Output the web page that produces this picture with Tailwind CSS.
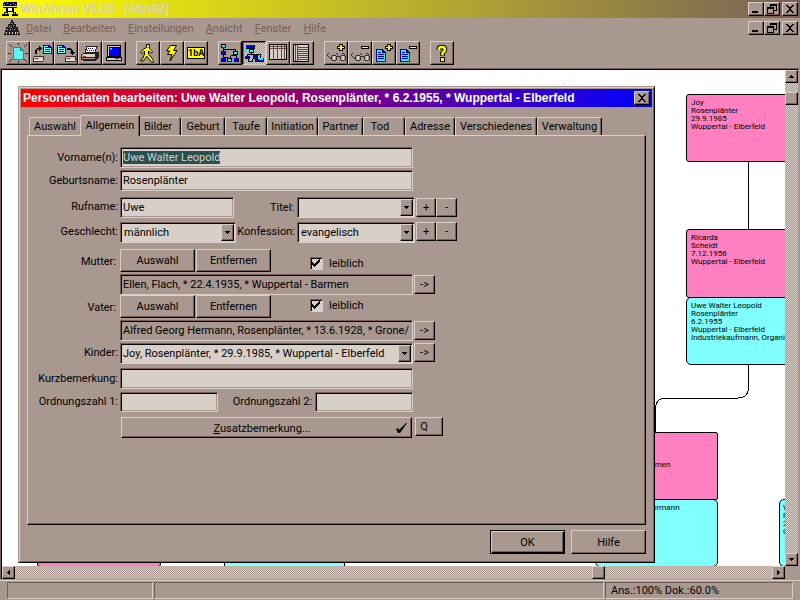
<!DOCTYPE html>
<html lang="de">
<head>
    <meta charset="UTF-8">
    <meta name="viewport" content="width=device-width, initial-scale=1.0">
    <title>WinAhnen V5.03 - [Ahn02]</title>
    <script src="https://cdn.jsdelivr.net/npm/@tailwindcss/browser@4"></script>
</head>
<body class="flex h-screen flex-col overflow-hidden bg-[#a89890] font-[Roboto,'Liberation_Sans',sans-serif] text-[11px] leading-[13px] text-black">

    <!-- Shared icons -->
    <svg class="hidden">
        <symbol id="i-min" viewBox="0 0 12 10"><path d="M2 7h6v2H2z"/></symbol>
        <symbol id="i-restore" viewBox="0 0 12 10"><path d="M4 0h7v7H8v3H1V3h3zM5 2v1h3v3h2V2zM2 5v4h5V5z" fill-rule="evenodd"/></symbol>
        <symbol id="i-close" viewBox="0 0 12 10"><path d="M2 1h2v1h1v1h2V2h1V1h2v1H9v1H8v1H7v2h1v1h1v1h1v1H8V8H7V7H5v1H4v1H2V8h1V7h1V6h1V4H4V3H3V2H2z"/></symbol>
        <symbol id="i-down" viewBox="0 0 5 3"><path d="M0 0h5v1H4v1H3v1H2V2H1V1H0z"/></symbol>
        <symbol id="i-check" viewBox="0 0 9 9"><path d="M0 3h1v1h1v1h1V4h1V3h1V2h1V1h1V0h1v3H7v1H6v1H5v1H4v1H3v1H2V7H1V6H0z"/></symbol>
        <symbol id="i-doc" viewBox="0 0 9 9"><path d="M0 0h6l3 3v6H0z" fill="#0000c0"/><path d="M1 1h4v2h3v5H1z" fill="#80ffff"/><path d="M2 2h3v1H2zM2 4h5v1H2zM2 6h5v1H2z" fill="#0000c0"/></symbol>
        <symbol id="i-drive" viewBox="0 0 11 6"><path d="M1 0h10v5H10v1H0V1h1z" fill="#303030"/><path d="M1 1h9v4H1z" fill="#d8d0c8"/><path d="M1 4h9v1H1z" fill="#fff"/><path d="M2 2h3v1H2z" fill="#f00"/></symbol>
        <symbol id="i-glasses" viewBox="0 0 19 9"><path d="M1 0h1v1H1zM0 1h1v2H0zM1 3h1v1H1zM2 4h1v1H2zM3 5h1v1H3zM9 0h1v1H9zM10 1h1v1h-1zM5 2h4v1H5zM4 3h1v4H4zM9 3h1v4H9zM5 7h4v1H5zM10 3h3v1h-3zM14 2h4v1h-4zM13 3h1v4h-1zM18 3h1v4h-1zM14 7h4v1h-4zM15 0h2v1h-2zM17 1h1v1h-1z" fill="#303030"/><path d="M6 3h2v4H6zM15 3h2v4h-2z" fill="#d8d0c8"/></symbol>
        <symbol id="i-paper" viewBox="0 0 10 13"><path d="M0 0h7v1h1v1h1v1h1v10H0z" fill="#000080"/><path d="M1 1h5v3h3v8H1z" fill="#00ffff"/><path d="M2 3h3v1H2zM2 5h6v1H2zM2 7h6v1H2zM2 9h6v1H2z" fill="#0000a0"/></symbol>
        <symbol id="i-plus" viewBox="0 0 8 7"><path d="M2 0h4v2h2v3H6v2H2V5H0V2h2z"/><path d="M3 1h2v2h2v1H5v2H3V4H1V3h2z" fill="#ff0"/></symbol>
        <symbol id="i-minus" viewBox="0 0 8 3"><path d="M0 0h8v3H0z"/><path d="M1 1h6v1H1z" fill="#ff0"/></symbol>
    </svg>

    <!-- Title bar -->
    <header class="flex h-[18px] shrink-0 items-center bg-linear-to-r/srgb from-[#ffff00] to-[#786058] pr-[2px] pl-[2px]">
        <svg class="h-4 w-4" viewBox="0 0 16 16" shape-rendering="crispEdges">
            <path d="M2 1h13v4H1V2h1z" fill="#000080"/>
            <path d="M2 3h1v1H2zM5 2h1v1H5zM8 3h1v1H8zM11 2h1v1h-1zM13 3h1v1h-1z" fill="#c8c800"/>
            <path d="M1 6h14v1h-3v4h2v2h2v2h-6v-2h1v-2H6v2h1v2H0v-2h2v-2h2V7H1z"/>
            <path d="M6 7h4v3H6zM3 12h2v1H3zM12 12h1v1h-1z" fill="#fff"/>
        </svg>
        <h1 class="ml-[2px] flex-1 font-['Liberation_Sans',Arial,sans-serif] text-[12px] font-bold text-[#d8d0c8]">WinAhnen V5.03 - [Ahn02]</h1>
        <div class="flex">
            <button aria-label="Minimieren" class="h-[14px] w-4 border border-t-[#d8d0c8] border-r-black border-b-black border-l-[#d8d0c8] bg-[#a89890] pl-px shadow-[inset_-1px_-1px_#786058]"><svg class="h-[10px] w-3" shape-rendering="crispEdges"><use href="#i-min"/></svg></button>
            <button aria-label="Wiederherstellen" class="h-[14px] w-4 border border-t-[#d8d0c8] border-r-black border-b-black border-l-[#d8d0c8] bg-[#a89890] pl-px shadow-[inset_-1px_-1px_#786058]"><svg class="h-[10px] w-3" shape-rendering="crispEdges"><use href="#i-restore"/></svg></button>
            <button aria-label="Schließen" class="ml-[2px] h-[14px] w-4 border border-t-[#d8d0c8] border-r-black border-b-black border-l-[#d8d0c8] bg-[#a89890] pl-px shadow-[inset_-1px_-1px_#786058]"><svg class="h-[10px] w-3" shape-rendering="crispEdges"><use href="#i-close"/></svg></button>
        </div>
    </header>

    <!-- Menu bar -->
    <nav class="flex h-[20px] shrink-0 items-center pr-[2px] pl-1 text-[#786058]">
        <svg class="mr-[6px] h-4 w-4" viewBox="0 0 16 16" shape-rendering="crispEdges">
            <path d="M7 0h2v2h1v2h2v3h2v3h1v3h1v2H0v-2h1v-3h1V7h2V4h2V2h1z" fill="#202020"/>
            <path d="M7 3h1v1H7zM9 5h1v1H9zM5 6h1v1H5zM7 7h1v1H7zM3 9h1v1H3zM6 9h1v1H6zM10 9h1v1h-1zM2 12h1v2H2zM5 12h1v2H5zM8 12h1v2H8zM11 12h1v2h-1zM13 12h1v2h-1z" fill="#d8d0c8"/>
        </svg>
        <div class="flex flex-1 gap-3">
            <a href="#"><u>D</u>atei</a>
            <a href="#"><u>B</u>earbeiten</a>
            <a href="#"><u>E</u>instellungen</a>
            <a href="#"><u>A</u>nsicht</a>
            <a href="#"><u>F</u>enster</a>
            <a href="#"><u>H</u>ilfe</a>
        </div>
        <div class="flex">
            <button aria-label="Minimieren" class="h-[14px] w-4 border border-t-[#d8d0c8] border-r-black border-b-black border-l-[#d8d0c8] pl-px text-black shadow-[inset_-1px_-1px_#786058]"><svg class="h-[10px] w-3" shape-rendering="crispEdges"><use href="#i-min"/></svg></button>
            <button aria-label="Wiederherstellen" class="h-[14px] w-4 border border-t-[#d8d0c8] border-r-black border-b-black border-l-[#d8d0c8] pl-px text-black shadow-[inset_-1px_-1px_#786058]"><svg class="h-[10px] w-3" shape-rendering="crispEdges"><use href="#i-restore"/></svg></button>
            <button aria-label="Schließen" class="ml-[2px] h-[14px] w-4 border border-t-[#d8d0c8] border-r-black border-b-black border-l-[#d8d0c8] pl-px text-black shadow-[inset_-1px_-1px_#786058]"><svg class="h-[10px] w-3" shape-rendering="crispEdges"><use href="#i-close"/></svg></button>
        </div>
    </nav>

    <!-- Toolbar -->
    <div class="flex shrink-0 gap-[10px] pt-[3px] pb-[3px] pl-[6px]">
        <div class="flex">
            <button aria-label="Neu" class="h-6 w-6 border border-t-[#d8d0c8] border-r-black border-b-black border-l-[#d8d0c8] p-px shadow-[inset_-1px_-1px_#786058]">
                <svg class="h-5 w-5" viewBox="0 0 20 20" shape-rendering="crispEdges">
                    <path d="M5 4h8v1h1v1h1v1h1v10H5z" fill="#00a0a0"/><path d="M6 5h6v3h3v8H6z" fill="#60f0f0"/>
                    <path d="M7 6h1v1H7zM9 8h1v1H9zM7 10h1v1H7zM11 10h1v1h-1zM9 12h1v1H9zM13 12h1v1h-1zM7 14h1v1H7zM11 14h1v1h-1z" fill="#d8ffff"/>
                    <path d="M1 1l3 3M19 1l-3 3M1 19l3-3M19 19l-3-3M0 10h3M17 10h3M10 0v2M10 18v2" stroke="#303030"/>
                </svg>
            </button>
            <button aria-label="Öffnen" class="h-6 w-6 border border-t-[#d8d0c8] border-r-black border-b-black border-l-[#d8d0c8] p-px shadow-[inset_-1px_-1px_#786058]">
                <svg class="h-5 w-5" viewBox="0 0 20 20" shape-rendering="crispEdges">
                    <use href="#i-doc" x="11" y="2" width="9" height="9"/><use href="#i-drive" x="1" y="13" width="11" height="6"/>
                    <path d="M3 11h2V7h1V6h1v2h1V7h1V6h1V5H9V4H8V3H7v2H5v1H4v1H3z"/>
                </svg>
            </button>
            <button aria-label="Sichern" class="h-6 w-6 border border-t-[#d8d0c8] border-r-black border-b-black border-l-[#d8d0c8] p-px shadow-[inset_-1px_-1px_#786058]">
                <svg class="h-5 w-5" viewBox="0 0 20 20" shape-rendering="crispEdges">
                    <use href="#i-doc" x="1" y="2" width="9" height="9"/><use href="#i-drive" x="9" y="13" width="11" height="6"/>
                    <path d="M11 5h4v1h1v1h1v2h2v1h-1v1h-1v1h-1v-1h-1v-1h-1V9h1V7h-4z"/>
                </svg>
            </button>
            <button aria-label="Drucken" class="h-6 w-6 border border-t-[#d8d0c8] border-r-black border-b-black border-l-[#d8d0c8] p-px shadow-[inset_-1px_-1px_#786058]">
                <svg class="h-5 w-5" viewBox="0 0 20 20" shape-rendering="crispEdges">
                    <path d="M6 3h12v1h-1v2h-1v3h3v6h-1v1h-1v1h-1v1H3v-1H1v-5h1v-1h1v-1h2V6h1z" fill="#202020"/>
                    <path d="M7 4h9v2h-1v3H6V7h1z" fill="#fff"/><path d="M8 5h1v1H8zM10 5h1v1h-1zM12 5h1v1h-1zM7 7h1v1H7zM9 7h1v1H9zM11 7h1v1h-1zM13 7h1v1h-1z" fill="#000080"/>
                    <path d="M3 11h12v1H3zM2 12h13v2H2z" fill="#d8d0c8"/><path d="M2 15h13v1H2z" fill="#a89890"/><path d="M3 13h3v1H3z" fill="#f00"/>
                </svg>
            </button>
            <button aria-label="Bildschirm" class="h-6 w-6 border border-t-[#d8d0c8] border-r-black border-b-black border-l-[#d8d0c8] p-px shadow-[inset_-1px_-1px_#786058]">
                <svg class="h-5 w-5" viewBox="0 0 20 20" shape-rendering="crispEdges">
                    <path d="M3 2h14v12h1v4H2v-4h1z"/><path d="M4 3h12v1H4zM4 4h1v9H4zM3 15h14v2H3z" fill="#d8d0c8"/>
                    <path d="M6 5h9v8H6z" fill="#0000ff"/><path d="M6 5h2v1H7v1H6z" fill="#0ff"/><path d="M11 15h4v1h-4z" fill="#303030"/>
                </svg>
            </button>
        </div>
        <div class="flex">
            <button aria-label="Gehe zu" class="h-6 w-6 border border-t-[#d8d0c8] border-r-black border-b-black border-l-[#d8d0c8] p-px shadow-[inset_-1px_-1px_#786058]">
                <svg class="h-5 w-5" viewBox="0 0 20 20">
                    <path d="M8.500 1.500h3v3h-1l2 2 2 2-1 1.500-3-2v3l2.500 3 2.500 3.500v1.500h-2l-5-6-2 4-3 1.500-1-1.500 2-1 2-5V8L5 9.500 3.500 11l-1-1.500 3-3.500 3-1.500z" fill="#ff0" stroke="#000"/>
                </svg>
            </button>
            <button aria-label="Schnellzugriff" class="h-6 w-6 border border-t-[#d8d0c8] border-r-black border-b-black border-l-[#d8d0c8] p-px shadow-[inset_-1px_-1px_#786058]">
                <svg class="h-5 w-5" viewBox="0 0 20 20">
                    <path d="M8.500 2.500h6l-3 5h3.500L8 18l2-6.500H5.500L8 8H4.500z" fill="#ff0" stroke="#000"/>
                </svg>
            </button>
            <button aria-label="Nummerierung" class="h-6 w-6 border border-t-[#d8d0c8] border-r-black border-b-black border-l-[#d8d0c8] p-px shadow-[inset_-1px_-1px_#786058]">
                <span class="mx-px block h-3 border border-black bg-[#ffff00] text-center text-[9px] leading-[10px] font-bold">1bA</span>
            </button>
        </div>
        <div class="flex">
            <button aria-label="Ahnentafel" class="h-6 w-6 border border-t-[#d8d0c8] border-r-black border-b-black border-l-[#d8d0c8] p-px shadow-[inset_-1px_-1px_#786058]">
                <svg class="h-5 w-5" viewBox="0 0 20 20" shape-rendering="crispEdges">
                    <path d="M3 4h1v13H3zM3 6h13v1H3zM15 7h1v3h-1zM10 13h1v-1h5v-2h1v6h-1v-3h-5v3h-1zM4 14h4v1H4z"/>
                    <path d="M1 1h5v4H1zM13 8h5v4h-5zM7 15h5v4H7zM1 8h5v4H1zM1 15h5v4H1zM14 15h5v4h-5z"/>
                    <path d="M2 2h3v2H2zM14 9h3v2h-3zM8 16h3v2H8z" fill="#0ff"/><path d="M1 8h4v3H1zM1 15h4v3H1zM14 15h4v3h-4z" fill="#00f"/>
                </svg>
            </button>
            <button aria-label="Stammbaum" aria-pressed="true" class="h-6 w-6 border border-t-black border-r-[#d8d0c8] border-b-[#d8d0c8] border-l-black bg-[repeating-conic-gradient(#d8d0c8_0_25%,#a89890_0_50%)] bg-[length:2px_2px] p-px shadow-[inset_1px_1px_#786058]">
                <svg class="h-5 w-5" viewBox="0 0 20 20" shape-rendering="crispEdges">
                    <path d="M2 2h9v4H2zM5 6h5v4H5zM7 10h1v2H7zM3 11h14v1H3zM3 12h1v2H3zM10 12h1v4h-1zM16 12h1v4h-1zM1 13h5v3H1zM4 16h5v3H4zM9 12h5v4H9zM11 16h4v3h-4zM15 15h5v4h-5z"/>
                    <path d="M2 2h8v3H2zM1 13h4v2H1zM9 12h4v3H9zM11 17h3v2h-3zM15 17h4v2h-4z" fill="#00f"/><path d="M2 6h3v2H2zM6 7h3v2H6zM5 16h3v2H5zM15 15h4v2h-4z" fill="#0ff"/>
                </svg>
            </button>
            <button aria-label="Tabelle" class="h-6 w-6 border border-t-[#d8d0c8] border-r-black border-b-black border-l-[#d8d0c8] p-px shadow-[inset_-1px_-1px_#786058]">
                <svg class="h-5 w-5" viewBox="0 0 20 20" shape-rendering="crispEdges">
                    <path d="M1 1h18v16H1z"/><path d="M2 2h16v14H2z" fill="#d8d0c8"/><path d="M2 3h16v1H2zM2 5h16v1H2zM5 2h1v14H5zM9 2h1v14H9zM13 2h1v14h-1zM16 2h1v14h-1z" fill="#604840"/>
                </svg>
            </button>
            <button aria-label="Liste" class="h-6 w-6 border border-t-[#d8d0c8] border-r-black border-b-black border-l-[#d8d0c8] p-px shadow-[inset_-1px_-1px_#786058]">
                <svg class="h-5 w-5" viewBox="0 0 20 20" shape-rendering="crispEdges">
                    <path d="M1 1h16v18H1z"/><path d="M2 2h14v16H2z" fill="#d8d0c8"/><path d="M3 2h1v16H3zM5 2h1v16H5zM6 4h10v1H6zM6 6h10v1H6zM6 8h10v1H6zM6 10h10v1H6zM6 12h10v1H6zM6 14h10v1H6zM6 16h10v1H6z" fill="#604840"/>
                </svg>
            </button>
        </div>
        <div class="flex">
            <button aria-label="Vergrößern" class="h-6 w-6 border border-t-[#d8d0c8] border-r-black border-b-black border-l-[#d8d0c8] p-px shadow-[inset_-1px_-1px_#786058]">
                <svg class="h-5 w-5" viewBox="0 0 20 20" shape-rendering="crispEdges"><use href="#i-glasses" x="1" y="10" width="19" height="9"/><use href="#i-plus" x="11" y="1" width="8" height="7"/></svg>
            </button>
            <button aria-label="Verkleinern" class="h-6 w-6 border border-t-[#d8d0c8] border-r-black border-b-black border-l-[#d8d0c8] p-px shadow-[inset_-1px_-1px_#786058]">
                <svg class="h-5 w-5" viewBox="0 0 20 20" shape-rendering="crispEdges"><use href="#i-glasses" x="1" y="10" width="19" height="9"/><use href="#i-minus" x="11" y="3" width="8" height="3"/></svg>
            </button>
            <button aria-label="Blatt hinzufügen" class="h-6 w-6 border border-t-[#d8d0c8] border-r-black border-b-black border-l-[#d8d0c8] p-px shadow-[inset_-1px_-1px_#786058]">
                <svg class="h-5 w-5" viewBox="0 0 20 20" shape-rendering="crispEdges"><use href="#i-paper" x="2" y="6" width="10" height="13"/><use href="#i-plus" x="11" y="1" width="8" height="7"/></svg>
            </button>
            <button aria-label="Blatt entfernen" class="h-6 w-6 border border-t-[#d8d0c8] border-r-black border-b-black border-l-[#d8d0c8] p-px shadow-[inset_-1px_-1px_#786058]">
                <svg class="h-5 w-5" viewBox="0 0 20 20" shape-rendering="crispEdges"><use href="#i-paper" x="2" y="6" width="10" height="13"/><use href="#i-minus" x="11" y="3" width="8" height="3"/></svg>
            </button>
        </div>
        <button aria-label="Hilfe" class="h-6 w-6 border border-t-[#d8d0c8] border-r-black border-b-black border-l-[#d8d0c8] p-px shadow-[inset_-1px_-1px_#786058]">
            <svg class="h-5 w-5" viewBox="0 0 20 20" fill="none">
                <path d="M7 7V5.500Q7 4 10 4t3 2.500Q13 8 10.500 10v3" stroke="#000" stroke-width="4.500"/><path d="M8 14h5v5H8z" fill="#000"/>
                <path d="M7 7V5.500Q7 4 10 4t3 2.500Q13 8 10.500 10v2.500" stroke="#ff0" stroke-width="2.500"/><path d="M9 15h3v3H9z" fill="#ff0"/>
            </svg>
        </button>
    </div>

    <!-- Workspace -->
    <main class="flex min-h-0 flex-1 border-t border-l border-[#786058] pr-[2px]">
        <div class="grid min-w-0 flex-1 grid-cols-[1fr_13px] grid-rows-[1fr_13px] border-t border-l border-black">

            <div class="relative overflow-hidden bg-white">
                <!-- Family tree -->
                <svg class="absolute top-0 left-0 h-[500px] w-[800px]" fill="none" stroke="#000">
                    <path d="M746.500 91v70M746.500 293v24q0 11-11 11h-71q-11 0-11 11v25" shape-rendering="crispEdges"/>
                </svg>
                <div class="text-[8px] leading-[8px] whitespace-nowrap">
                    <div class="absolute top-6 left-[684px] h-[68px] w-[124px] rounded-[3px] border border-black bg-[#ff80c0] px-1 py-1">Joy<br>Rosenplänter<br>29.9.1985<br>Wuppertal - Elberfeld</div>
                    <div class="absolute top-[159px] left-[684px] h-[69px] w-[124px] rounded-[3px] border border-black bg-[#ff80c0] px-1 py-1">Ricarda<br>Scheidt<br>7.12.1956<br>Wuppertal - Elberfeld</div>
                    <div class="absolute top-[227px] left-[684px] h-[68px] w-[124px] rounded-[5px] border border-black bg-[#80ffff] px-1 py-1">Uwe Walter Leopold<br>Rosenplänter<br>6.2.1955<br>Wuppertal - Elberfeld<br>Industriekaufmann, Organisa</div>
                    <div class="absolute top-[362px] left-[593px] h-[68px] w-[123px] rounded-[2px] border border-black bg-[#ff80c0] px-1 py-1">Ellen<br>Flach<br>22.4.1935<br>Wuppertal - Barmen</div>
                    <div class="absolute top-[429px] left-[593px] h-[68px] w-[123px] rounded-[5px] border border-black bg-[#80ffff] px-1 py-1">Alfred Georg Hermann<br>Rosenplänter<br>13.6.1928</div>
                    <div class="absolute top-[429px] left-[777px] h-[68px] w-[123px] rounded-[5px] border border-black bg-[#80ffff] px-[3px] py-1">W<br>R<br>2<br>G</div>
                    <div class="absolute top-[429px] left-[35px] h-[68px] w-[124px] rounded-[3px] border border-black bg-[#ff80c0]"></div>
                    <div class="absolute top-[429px] left-[222px] h-[68px] w-[121px] border border-black bg-[#80ffff]"></div>
                </div>

                <!-- Person dialog -->
                <section class="absolute top-4 left-4 w-[637px] border border-t-[#a89890] border-r-black border-b-black border-l-[#a89890] bg-[#a89890] p-[2px] pb-2 shadow-[inset_1px_1px_#d8d0c8,inset_-1px_-1px_#786058]">
                    <div class="flex h-[18px] items-center bg-linear-to-r/srgb from-[#ff0000] to-[#0000ff] pr-[2px] pl-[2px]">
                        <h2 class="flex-1 font-['Liberation_Sans',Arial,sans-serif] text-[12px] font-bold whitespace-nowrap text-white">Personendaten bearbeiten: Uwe Walter Leopold, Rosenplänter, * 6.2.1955, * Wuppertal - Elberfeld</h2>
                        <button aria-label="Schließen" class="h-[14px] w-4 border border-t-[#d8d0c8] border-r-black border-b-black border-l-[#d8d0c8] bg-[#a89890] pl-px shadow-[inset_-1px_-1px_#786058]"><svg class="h-[10px] w-3" shape-rendering="crispEdges"><use href="#i-close"/></svg></button>
                    </div>

                    <div class="flex items-end pt-2 pl-2" role="tablist">
                        <button role="tab" class="h-[18px] w-[51px] rounded-t-[2px] border-t border-l border-[#d8d0c8] whitespace-nowrap">Auswahl</button>
                        <button role="tab" aria-selected="true" class="relative z-10 -mb-px h-[21px] w-[60px] rounded-t-[2px] border-t border-r border-l border-t-[#d8d0c8] border-r-black border-l-[#d8d0c8] bg-[#a89890] pb-[2px] whitespace-nowrap shadow-[inset_-1px_0_#786058]">Allgemein</button>
                        <button role="tab" class="h-[18px] w-[41px] rounded-t-[2px] border-t border-r border-t-[#d8d0c8] border-r-black pr-1 whitespace-nowrap shadow-[inset_-1px_0_#786058]">Bilder</button>
                        <button role="tab" class="h-[18px] w-[44px] rounded-t-[2px] border-t border-r border-l border-t-[#d8d0c8] border-r-black border-l-[#d8d0c8] whitespace-nowrap shadow-[inset_-1px_0_#786058]">Geburt</button>
                        <button role="tab" class="h-[18px] w-[42px] rounded-t-[2px] border-t border-r border-l border-t-[#d8d0c8] border-r-black border-l-[#d8d0c8] whitespace-nowrap shadow-[inset_-1px_0_#786058]">Taufe</button>
                        <button role="tab" class="h-[18px] w-[51px] rounded-t-[2px] border-t border-r border-l border-t-[#d8d0c8] border-r-black border-l-[#d8d0c8] whitespace-nowrap shadow-[inset_-1px_0_#786058]">Initiation</button>
                        <button role="tab" class="h-[18px] w-[45px] rounded-t-[2px] border-t border-r border-l border-t-[#d8d0c8] border-r-black border-l-[#d8d0c8] whitespace-nowrap shadow-[inset_-1px_0_#786058]">Partner</button>
                        <button role="tab" class="h-[18px] w-[42px] rounded-t-[2px] border-t border-r border-l border-t-[#d8d0c8] border-r-black border-l-[#d8d0c8] pr-2 whitespace-nowrap shadow-[inset_-1px_0_#786058]">Tod</button>
                        <button role="tab" class="h-[18px] w-[50px] rounded-t-[2px] border-t border-r border-l border-t-[#d8d0c8] border-r-black border-l-[#d8d0c8] whitespace-nowrap shadow-[inset_-1px_0_#786058]">Adresse</button>
                        <button role="tab" class="h-[18px] w-[82px] rounded-t-[2px] border-t border-r border-l border-t-[#d8d0c8] border-r-black border-l-[#d8d0c8] whitespace-nowrap shadow-[inset_-1px_0_#786058]">Verschiedenes</button>
                        <button role="tab" class="h-[18px] w-[65px] rounded-t-[2px] border-t border-r border-l border-t-[#d8d0c8] border-r-black border-l-[#d8d0c8] whitespace-nowrap shadow-[inset_-1px_0_#786058]">Verwaltung</button>
                    </div>

                    <form class="mr-[6px] ml-[6px] min-h-[390px] border border-t-[#d8d0c8] border-r-black border-b-black border-l-[#d8d0c8] pt-[11px] shadow-[inset_-1px_-1px_#786058]">
                        <div class="mb-[2px] flex h-[21px]">
                            <label for="vorname" class="w-[92px] pt-1 pr-[2px] text-right">Vorname(n):</label>
                            <input id="vorname" value="Uwe Walter Leopold" class="w-[293px] border border-t-[#786058] border-r-[#d8d0c8] border-b-[#d8d0c8] border-l-[#786058] bg-[#d8d0c8] px-[2px] shadow-[inset_1px_1px_#000,inset_-1px_-1px_#a89890] outline-none selection:bg-[#285050] selection:text-[#d8d0c8]">
                        </div>
                        <div class="mb-[6px] flex h-[21px]">
                            <label for="gebname" class="w-[92px] pt-1 pr-[2px] text-right">Geburtsname:</label>
                            <input id="gebname" value="Rosenplänter" class="w-[293px] border border-t-[#786058] border-r-[#d8d0c8] border-b-[#d8d0c8] border-l-[#786058] bg-[#d8d0c8] px-[2px] shadow-[inset_1px_1px_#000,inset_-1px_-1px_#a89890]">
                        </div>
                        <div class="mb-1 flex h-[21px]">
                            <label for="rufname" class="w-[92px] pt-[3px] pr-[2px] text-right">Rufname:</label>
                            <input id="rufname" value="Uwe" class="w-[114px] border border-t-[#786058] border-r-[#d8d0c8] border-b-[#d8d0c8] border-l-[#786058] bg-[#d8d0c8] px-[2px] shadow-[inset_1px_1px_#000,inset_-1px_-1px_#a89890]">
                            <label for="titel" class="w-[63px] pt-1 pr-[3px] text-right">Titel:</label>
                            <div class="relative mr-px w-[118px]">
                                <select id="titel" class="h-[21px] w-full appearance-none border border-t-[#786058] border-r-[#d8d0c8] border-b-[#d8d0c8] border-l-[#786058] bg-[#d8d0c8] pl-[3px] shadow-[inset_1px_1px_#000]"><option></option></select>
                                <span class="pointer-events-none absolute top-[2px] right-[2px] flex h-[17px] w-[13px] items-center justify-center border border-t-[#d8d0c8] border-r-black border-b-black border-l-[#d8d0c8] bg-[#a89890] shadow-[inset_-1px_-1px_#786058]"><svg class="h-[3px] w-[5px]" shape-rendering="crispEdges"><use href="#i-down"/></svg></span>
                            </div>
                            <button type="button" class="mt-px h-[19px] w-5 border border-t-[#d8d0c8] border-r-black border-b-black border-l-[#d8d0c8] shadow-[inset_-1px_-1px_#786058]">+</button>
                            <button type="button" class="mt-px h-[19px] w-[21px] border border-t-[#d8d0c8] border-r-black border-b-black border-l-[#d8d0c8] shadow-[inset_-1px_-1px_#786058]">-</button>
                        </div>
                        <div class="mb-[6px] flex h-[21px]">
                            <label for="geschlecht" class="w-[92px] pt-[3px] pr-[2px] text-right">Geschlecht:</label>
                            <div class="relative w-[116px]">
                                <select id="geschlecht" class="h-[21px] w-full appearance-none border border-t-[#786058] border-r-[#d8d0c8] border-b-[#d8d0c8] border-l-[#786058] bg-[#d8d0c8] pl-[3px] shadow-[inset_1px_1px_#000]"><option>männlich</option><option>weiblich</option></select>
                                <span class="pointer-events-none absolute top-[2px] right-[2px] flex h-[17px] w-[13px] items-center justify-center border border-t-[#d8d0c8] border-r-black border-b-black border-l-[#d8d0c8] bg-[#a89890] shadow-[inset_-1px_-1px_#786058]"><svg class="h-[3px] w-[5px]" shape-rendering="crispEdges"><use href="#i-down"/></svg></span>
                            </div>
                            <label for="konfession" class="w-[61px] pt-[3px] pr-[2px] text-right">Konfession:</label>
                            <div class="relative mr-px w-[118px]">
                                <select id="konfession" class="h-[21px] w-full appearance-none border border-t-[#786058] border-r-[#d8d0c8] border-b-[#d8d0c8] border-l-[#786058] bg-[#d8d0c8] pl-[3px] shadow-[inset_1px_1px_#000]"><option>evangelisch</option></select>
                                <span class="pointer-events-none absolute top-[2px] right-[2px] flex h-[17px] w-[13px] items-center justify-center border border-t-[#d8d0c8] border-r-black border-b-black border-l-[#d8d0c8] bg-[#a89890] shadow-[inset_-1px_-1px_#786058]"><svg class="h-[3px] w-[5px]" shape-rendering="crispEdges"><use href="#i-down"/></svg></span>
                            </div>
                            <button type="button" class="h-[19px] w-5 border border-t-[#d8d0c8] border-r-black border-b-black border-l-[#d8d0c8] shadow-[inset_-1px_-1px_#786058]">+</button>
                            <button type="button" class="h-[19px] w-[21px] border border-t-[#d8d0c8] border-r-black border-b-black border-l-[#d8d0c8] shadow-[inset_-1px_-1px_#786058]">-</button>
                        </div>
                        <div class="mb-[2px] flex h-[23px]">
                            <label for="mutter" class="w-[92px] pt-[6px] pr-1 text-right">Mutter:</label>
                            <button type="button" class="mr-px w-[75px] border border-t-[#d8d0c8] border-r-black border-b-black border-l-[#d8d0c8] shadow-[inset_-1px_-1px_#786058]">Auswahl</button>
                            <button type="button" class="w-[75px] border border-t-[#d8d0c8] border-r-black border-b-black border-l-[#d8d0c8] shadow-[inset_-1px_-1px_#786058]">Entfernen</button>
                            <label class="mt-2 ml-[39px] flex h-[13px] items-center gap-[6px]">
                                <span class="grid place-items-center">
                                    <input type="checkbox" checked class="peer col-start-1 row-start-1 h-[13px] w-[13px] appearance-none border border-t-[#786058] border-r-[#d8d0c8] border-b-[#d8d0c8] border-l-[#786058] bg-[#d8d0c8] shadow-[inset_1px_1px_#000]">
                                    <svg class="pointer-events-none invisible col-start-1 row-start-1 h-[9px] w-[9px] peer-checked:visible" shape-rendering="crispEdges"><use href="#i-check"/></svg>
                                </span>
                                leiblich
                            </label>
                        </div>
                        <div class="flex h-[21px] pl-[92px]">
                            <input id="mutter" readonly value="Ellen, Flach, * 22.4.1935, * Wuppertal - Barmen" class="mr-px w-[293px] border border-t-[#786058] border-r-[#d8d0c8] border-b-[#d8d0c8] border-l-[#786058] px-[2px] shadow-[inset_1px_1px_#000]">
                            <button type="button" class="mt-px h-[19px] w-[21px] border border-t-[#d8d0c8] border-r-black border-b-black border-l-[#d8d0c8] shadow-[inset_-1px_-1px_#786058]">-&gt;</button>
                        </div>
                        <div class="mb-[2px] flex h-[23px]">
                            <label for="vater" class="w-[92px] pt-[6px] pr-1 text-right">Vater:</label>
                            <button type="button" class="mr-px w-[75px] border border-t-[#d8d0c8] border-r-black border-b-black border-l-[#d8d0c8] shadow-[inset_-1px_-1px_#786058]">Auswahl</button>
                            <button type="button" class="w-[75px] border border-t-[#d8d0c8] border-r-black border-b-black border-l-[#d8d0c8] shadow-[inset_-1px_-1px_#786058]">Entfernen</button>
                            <label class="mt-1 ml-[39px] flex h-[13px] items-center gap-[6px]">
                                <span class="grid place-items-center">
                                    <input type="checkbox" checked class="peer col-start-1 row-start-1 h-[13px] w-[13px] appearance-none border border-t-[#786058] border-r-[#d8d0c8] border-b-[#d8d0c8] border-l-[#786058] bg-[#d8d0c8] shadow-[inset_1px_1px_#000]">
                                    <svg class="pointer-events-none invisible col-start-1 row-start-1 h-[9px] w-[9px] peer-checked:visible" shape-rendering="crispEdges"><use href="#i-check"/></svg>
                                </span>
                                leiblich
                            </label>
                        </div>
                        <div class="mb-[2px] flex h-[21px] pl-[92px]">
                            <input id="vater" readonly value="Alfred Georg Hermann, Rosenplänter, * 13.6.1928, * Grone/" class="mr-px w-[293px] border border-t-[#786058] border-r-[#d8d0c8] border-b-[#d8d0c8] border-l-[#786058] px-[2px] shadow-[inset_1px_1px_#000]">
                            <button type="button" class="mt-px h-[19px] w-[21px] border border-t-[#d8d0c8] border-r-black border-b-black border-l-[#d8d0c8] shadow-[inset_-1px_-1px_#786058]">-&gt;</button>
                        </div>
                        <div class="mb-1 flex h-[21px]">
                            <label for="kinder" class="w-[92px] pt-[3px] pr-[2px] text-right">Kinder:</label>
                            <div class="relative mr-px w-[293px]">
                                <select id="kinder" class="h-[21px] w-full appearance-none border border-t-[#786058] border-r-[#d8d0c8] border-b-[#d8d0c8] border-l-[#786058] bg-[#d8d0c8] pl-[2px] shadow-[inset_1px_1px_#000]"><option>Joy, Rosenplänter, * 29.9.1985, * Wuppertal - Elberfeld</option></select>
                                <span class="pointer-events-none absolute top-[2px] right-[2px] flex h-[17px] w-[13px] items-center justify-center border border-t-[#d8d0c8] border-r-black border-b-black border-l-[#d8d0c8] bg-[#a89890] shadow-[inset_-1px_-1px_#786058]"><svg class="h-[3px] w-[5px]" shape-rendering="crispEdges"><use href="#i-down"/></svg></span>
                            </div>
                            <button type="button" class="h-[19px] w-[21px] border border-t-[#d8d0c8] border-r-black border-b-black border-l-[#d8d0c8] shadow-[inset_-1px_-1px_#786058]">-&gt;</button>
                        </div>
                        <div class="mb-[3px] flex h-[21px]">
                            <label for="kurz" class="w-[92px] pt-1 pr-[2px] text-right">Kurzbemerkung:</label>
                            <input id="kurz" class="w-[293px] border border-t-[#786058] border-r-[#d8d0c8] border-b-[#d8d0c8] border-l-[#786058] bg-[#d8d0c8] px-[2px] shadow-[inset_1px_1px_#000,inset_-1px_-1px_#a89890]">
                        </div>
                        <div class="mb-[5px] flex h-5">
                            <label for="ord1" class="w-[92px] pt-[3px] pr-[2px] text-right">Ordnungszahl 1:</label>
                            <input id="ord1" class="w-[98px] border border-t-[#786058] border-r-[#d8d0c8] border-b-[#d8d0c8] border-l-[#786058] bg-[#d8d0c8] px-[2px] shadow-[inset_1px_1px_#000,inset_-1px_-1px_#a89890]">
                            <label for="ord2" class="w-[97px] pt-[3px] pr-[3px] text-right">Ordnungszahl 2:</label>
                            <input id="ord2" class="w-[98px] border border-t-[#786058] border-r-[#d8d0c8] border-b-[#d8d0c8] border-l-[#786058] bg-[#d8d0c8] px-[2px] shadow-[inset_1px_1px_#000,inset_-1px_-1px_#a89890]">
                        </div>
                        <div class="flex h-[21px] pl-[93px]">
                            <button type="button" class="mr-[3px] flex w-[291px] items-center border border-t-[#d8d0c8] border-r-black border-b-black border-l-[#d8d0c8] pr-1 pl-1 shadow-[inset_-1px_-1px_#786058]">
                                <span class="flex-1 pt-px pl-[2px]"><u>Z</u>usatzbemerkung...</span>
                                <svg class="h-[10px] w-[11px]" viewBox="0 0 11 10"><path d="M0 6l2-1 1 2L10 0h1L4 10H2z"/></svg>
                            </button>
                            <button type="button" class="h-[19px] w-7 border border-t-[#d8d0c8] border-r-black border-b-black border-l-[#d8d0c8] pr-[10px] shadow-[inset_-1px_-1px_#786058]">Q</button>
                        </div>
                    </form>

                    <div class="mt-[5px] flex justify-end gap-[6px] pr-[6px]">
                        <button class="h-6 w-[75px] border border-black shadow-[inset_1px_1px_#d8d0c8,inset_-1px_-1px_#000,inset_-2px_-2px_#786058]">OK</button>
                        <button class="h-6 w-[75px] border border-t-[#d8d0c8] border-r-black border-b-black border-l-[#d8d0c8] shadow-[inset_-1px_-1px_#786058]">Hilfe</button>
                    </div>
                </section>
            </div>

            <!-- Vertical scroll bar -->
            <div class="flex flex-col bg-[repeating-conic-gradient(#d8d0c8_0_25%,#a89890_0_50%)] bg-[length:2px_2px]">
                <button aria-label="Nach oben" class="flex h-[13px] items-center justify-center border border-t-[#d8d0c8] border-r-black border-b-black border-l-[#d8d0c8] bg-[#a89890] shadow-[inset_-1px_-1px_#786058]"><svg class="h-[3px] w-[5px] rotate-180" shape-rendering="crispEdges"><use href="#i-down"/></svg></button>
                <div class="mt-[9px] mb-auto h-[13px] border border-t-[#d8d0c8] border-r-black border-b-black border-l-[#d8d0c8] bg-[#a89890] shadow-[inset_-1px_-1px_#786058]"></div>
                <button aria-label="Nach unten" class="flex h-[13px] items-center justify-center border border-t-[#d8d0c8] border-r-black border-b-black border-l-[#d8d0c8] bg-[#a89890] shadow-[inset_-1px_-1px_#786058]"><svg class="h-[3px] w-[5px]" shape-rendering="crispEdges"><use href="#i-down"/></svg></button>
            </div>

            <!-- Horizontal scroll bar -->
            <div class="flex bg-[repeating-conic-gradient(#d8d0c8_0_25%,#a89890_0_50%)] bg-[length:2px_2px]">
                <button aria-label="Nach links" class="flex w-[13px] items-center justify-center border border-t-[#d8d0c8] border-r-black border-b-black border-l-[#d8d0c8] bg-[#a89890] shadow-[inset_-1px_-1px_#786058]"><svg class="h-[5px] w-[3px]" shape-rendering="crispEdges"><path d="M3 0v5H2V4H1V3H0V2h1V1h1V0z"/></svg></button>
                <div class="mr-[167px] ml-auto w-[13px] border border-t-[#d8d0c8] border-r-black border-b-black border-l-[#d8d0c8] bg-[#a89890] shadow-[inset_-1px_-1px_#786058]"></div>
                <button aria-label="Nach rechts" class="flex w-[13px] items-center justify-center border border-t-[#d8d0c8] border-r-black border-b-black border-l-[#d8d0c8] bg-[#a89890] shadow-[inset_-1px_-1px_#786058]"><svg class="h-[5px] w-[3px]" shape-rendering="crispEdges"><path d="M0 0v5h1V4h1V3h1V2H2V1H1V0z"/></svg></button>
            </div>
        </div>
    </main>

    <!-- Status bar -->
    <footer class="mt-px flex shrink-0 gap-px border-t border-[#d8d0c8] pt-px pr-[7px] pb-px pl-[7px]">
        <div class="h-[17px] w-[146px] border border-t-[#786058] border-r-[#d8d0c8] border-b-[#d8d0c8] border-l-[#786058]"></div>
        <div class="h-[17px] flex-1 border border-t-[#786058] border-r-[#d8d0c8] border-b-[#d8d0c8] border-l-[#786058]"></div>
        <div class="h-[17px] w-[188px] border border-t-[#786058] border-r-[#d8d0c8] border-b-[#d8d0c8] border-l-[#786058] pl-[5px] leading-[15px]">Ans.:100% Dok.:60.0%</div>
    </footer>

    <script>
        // Start with the first name selected
        document.getElementById('vorname').select();
    </script>
</body>
</html>
